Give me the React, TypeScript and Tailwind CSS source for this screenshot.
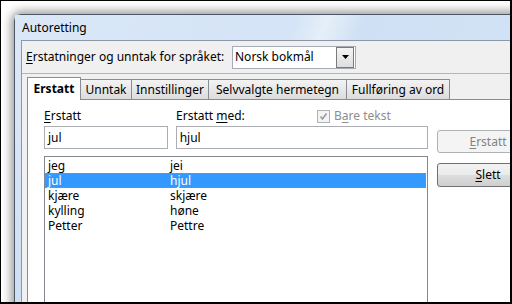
const tabs = [
  { label: 'Unntak', w: 'w-[52px]' },
  { label: 'Innstillinger', w: 'w-[78px]' },
  { label: 'Selvvalgte hermetegn', w: 'w-[139px]' },
  { label: 'Fullføring av ord', w: 'w-[104px]' },
];

const rows = [
  ['jeg', 'jei'],
  ['jul', 'hjul'],
  ['kjære', 'skjære'],
  ['kylling', 'høne'],
  ['Petter', 'Pettre'],
];

function Dropdown() {
  return (
    <div className="flex items-center w-[124px] h-[23px] border border-[#a5acb5] bg-white pl-[2px] pr-px">
      <span className="flex-1">Norsk bokmål</span>
      <div className="w-[18px] h-[21px] flex items-center justify-center border border-[#7a7a7a] bg-gradient-to-b from-[#f4f4f4] to-[#dedede]">
        <svg width="7" height="4" viewBox="0 0 7 4">
          <path d="M0 0h7L3.5 4z" fill="#000" />
        </svg>
      </div>
    </div>
  );
}

function TabStrip() {
  return (
    <div className="flex items-end h-[25px]">
      <div className="relative z-10 -mb-px w-[54px] h-[23px] flex items-center justify-center border border-b-0 border-[#898c95] bg-white font-bold">
        Erstatt
      </div>
      {tabs.map(t => (
        <div
          key={t.label}
          className={`-ml-px ${t.w} h-[20px] flex items-center justify-center border border-b-0 border-[#898c95] bg-gradient-to-b from-[#f3f3f3] to-[#dcdcdc]`}
        >
          {t.label}
        </div>
      ))}
    </div>
  );
}

function ListBox() {
  return (
    <div className="mt-[7px] h-[160px] border border-[#828790] bg-white pt-px">
      {rows.map(([a, b], i) => {
        const selected = i === 1;
        return (
          <div
            key={a}
            className={
              selected
                ? 'flex h-[15px] leading-[13px] mr-px bg-[#3399ff] text-white border border-dotted border-[#d4821c]'
                : 'flex h-[15px] leading-[15px] mr-px px-px'
            }
          >
            <span className="w-[124px] pl-[2px]">{a}</span>
            <span>{b}</span>
          </div>
        );
      })}
    </div>
  );
}

function Panel() {
  return (
    <div className="flex-1 border-l border-t border-[#898c95] bg-white pl-[16px] pt-[8px] flex">
      <div className="w-[384px]">
        <div className="flex h-[16px] items-center leading-[16px]">
          <span className="w-[132px]">
            <span className="underline underline-offset-2">E</span>rstatt
          </span>
          <span className="w-[141px]">
            Erstatt <span className="underline underline-offset-2">m</span>ed:
          </span>
          <div className="flex items-center gap-[4px] text-[#8d8d8d]">
            <div className="w-[13px] h-[13px] border border-[#b1b1b1] bg-[#f4f4f4] flex items-center justify-center">
              <svg width="9" height="9" viewBox="0 0 9 9">
                <path d="M1.5 4.5l2 2.5L7.5 1.5" stroke="#9a9a9a" strokeWidth="1.6" fill="none" />
              </svg>
            </div>
            <span>
              B<span className="underline underline-offset-2">a</span>re tekst
            </span>
          </div>
        </div>
        <div className="flex gap-[8px] mt-[2px]">
          <div className="w-[124px] h-[23px] border border-[#abadb3] bg-white pl-[3px] leading-[21px]">jul</div>
          <div className="w-[253px] h-[23px] border border-[#abadb3] bg-white pl-[3px] leading-[21px]">hjul</div>
        </div>
        <ListBox />
      </div>
      <div className="ml-[9px] pt-[22px] flex flex-col gap-[10px]">
        <div className="w-[102px] h-[23px] rounded-[3px] border border-[#adb2b5] bg-[#f4f4f4] text-[#838383] flex items-center justify-center">
          <span>
            <span className="underline underline-offset-2">E</span>rstatt
          </span>
        </div>
        <div className="w-[102px] h-[24px] rounded-[3px] border border-[#707070] bg-[linear-gradient(180deg,#f2f2f2_0%,#ebebeb_50%,#dddddd_51%,#cfcfcf_100%)] flex items-center justify-center">
          <span>
            <span className="underline underline-offset-2">S</span>lett
          </span>
        </div>
      </div>
    </div>
  );
}

export default function App() {
  return (
    <div className="w-[512px] h-[304px] overflow-hidden bg-white border-l border-t border-r-2 border-b-2 border-black font-['Noto_Sans',sans-serif] text-[12px] text-black">
      <div className="pl-[13px] pt-[13px]">
        <div className="w-[620px] h-[400px] rounded-t-[7px] border border-[#4d5866] bg-[linear-gradient(180deg,#dde9f7,#c9dbf2)] shadow-[0_0_10px_3px_rgba(0,0,0,0.4)] flex flex-col">
          <div className="h-[25px] flex items-center pl-[7px] bg-[linear-gradient(110deg,#d9e7f7_0%,#d5e4f6_45%,#e6eff9_50%,#cfe0f4_56%,#d3e3f6_100%)]">
            Autoretting
          </div>
          <div className="flex-1 pl-[6px] flex">
            <div className="flex-1 border-l border-t border-[#8c98a8] bg-[#f0f0f0] flex flex-col">
              <div className="h-[33px] flex items-center border-b border-[#b5b5b5]">
                <span className="w-[210px] pl-[4px]">
                  <span className="underline underline-offset-2">E</span>rstatninger og unntak for språket:
                </span>
                <Dropdown />
              </div>
              <div className="flex-1 pl-[5px] flex flex-col">
                <TabStrip />
                <Panel />
              </div>
            </div>
          </div>
        </div>
      </div>
    </div>
  );
}
